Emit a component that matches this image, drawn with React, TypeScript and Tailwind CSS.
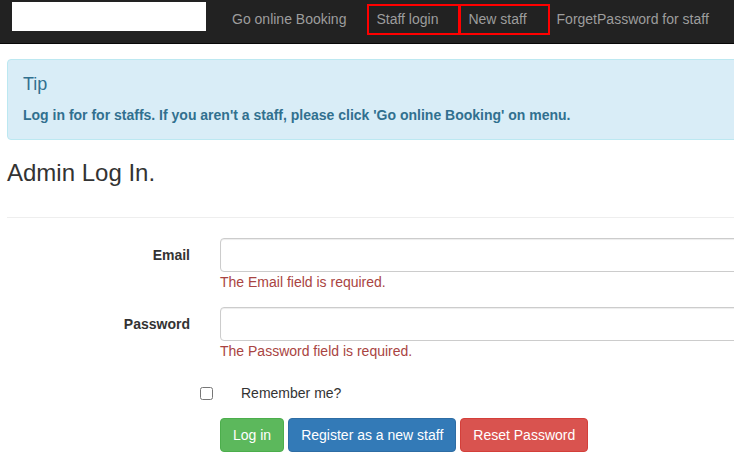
import React from 'react';

const navLinks = [
  { label: 'Go online Booking', marked: false },
  { label: 'Staff login', marked: true, boxW: 'w-[93px]' },
  { label: 'New staff', marked: true, boxW: 'w-[91px]' },
  { label: 'ForgetPassword for staff', marked: false },
];

export default function App() {
  return (
    <div className="h-[472px] w-[734px] overflow-hidden bg-white font-['Liberation_Sans',Arial,sans-serif] text-[14px] leading-[20px] text-[#333]">
      <nav className="flex h-[44px] items-start border-b border-[#080808] bg-[#222]">
        <div className="ml-[12px] mt-[2px] h-[29px] w-[194px] shrink-0 bg-white" />
        <ul className="ml-[11px] flex">
          {navLinks.map((link) => (
            <li key={link.label} className="relative shrink-0">
              <a className="block whitespace-nowrap px-[15px] pt-[9px] text-[#9d9d9d]">{link.label}</a>
              {link.marked && (
                <span
                  className={`pointer-events-none absolute left-[6px] top-[4px] h-[31px] border-2 border-[#ff0000] ${link.boxW}`}
                />
              )}
            </li>
          ))}
        </ul>
      </nav>

      <div className="pl-[7px]">
        <div className="mt-[15px] w-[780px] rounded-[4px] border border-[#bce8f1] bg-[#d9edf7] px-[15px] pb-[14px] pt-[14px] text-[#31708f]">
          <h4 className="text-[18px] leading-[20px]">Tip</h4>
          <p className="mt-[11px] font-bold">
            Log in for for staffs. If you aren&apos;t a staff, please click &apos;Go online Booking&apos; on menu.
          </p>
        </div>

        <h2 className="mt-[20px] text-[24px] leading-[26px] text-[#333]">Admin Log In.</h2>
        <hr className="mt-[31px] w-[780px] border-t border-[#eee]" />

        <form className="mt-[20px]">
          <div className="mb-[15px] flex">
            <label className="w-[183px] shrink-0 pt-[7px] text-right font-bold">Email</label>
            <div className="ml-[30px]">
              <input
                type="email"
                className="block h-[34px] w-[600px] rounded-[4px] border border-[#ccc] px-[12px] shadow-[inset_0_1px_1px_rgba(0,0,0,0.075)]"
              />
              <span className="block text-[#a94442]">The Email field is required.</span>
            </div>
          </div>

          <div className="flex">
            <label className="w-[183px] shrink-0 pt-[7px] text-right font-bold">Password</label>
            <div className="ml-[30px]">
              <input
                type="password"
                className="block h-[34px] w-[600px] rounded-[4px] border border-[#ccc] px-[12px] shadow-[inset_0_1px_1px_rgba(0,0,0,0.075)]"
              />
              <span className="block text-[#a94442]">The Password field is required.</span>
            </div>
          </div>

          <div className="mt-[22px] flex items-center">
            <input type="checkbox" className="m-0 ml-[193px] h-[13px] w-[13px]" />
            <label className="ml-[28px]">Remember me?</label>
          </div>

          <div className="ml-[213px] mt-[15px] flex gap-[4px]">
            <button
              type="button"
              className="h-[34px] rounded-[4px] border border-[#4cae4c] bg-[#5cb85c] px-[12px] text-white"
            >
              Log in
            </button>
            <button
              type="button"
              className="h-[34px] rounded-[4px] border border-[#2e6da4] bg-[#337ab7] px-[12px] text-white"
            >
              Register as a new staff
            </button>
            <button
              type="button"
              className="h-[34px] rounded-[4px] border border-[#d43f3a] bg-[#d9534f] px-[12px] text-white"
            >
              Reset Password
            </button>
          </div>
        </form>
      </div>
    </div>
  );
}
